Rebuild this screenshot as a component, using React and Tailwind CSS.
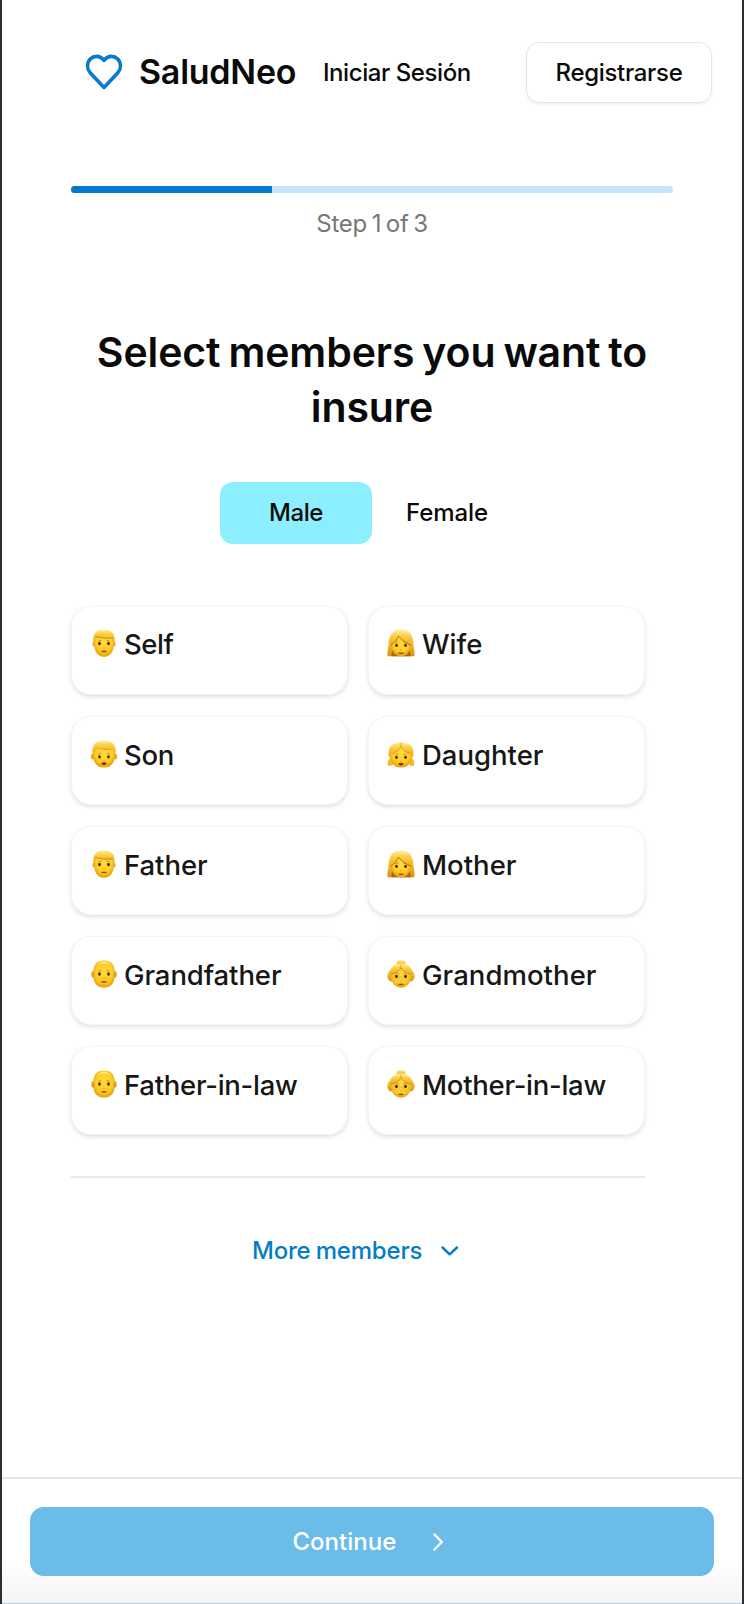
import React from 'react';

function Defs() {
  return (
    <svg className="absolute h-0 w-0" aria-hidden="true">
      <defs>
        <radialGradient id="skin" cx="50%" cy="42%" r="60%">
          <stop offset="0" stopColor="#ffdb3c" />
          <stop offset="0.65" stopColor="#fecb25" />
          <stop offset="1" stopColor="#e29a0c" />
        </radialGradient>
        <linearGradient id="hair" x1="0" y1="0" x2="0" y2="1">
          <stop offset="0" stopColor="#fff0a6" />
          <stop offset="0.35" stopColor="#fdd048" />
          <stop offset="1" stopColor="#eda91a" />
        </linearGradient>
        <linearGradient id="longHair" x1="0" y1="0" x2="0" y2="1">
          <stop offset="0" stopColor="#ffe88f" />
          <stop offset="0.5" stopColor="#f9c02c" />
          <stop offset="1" stopColor="#d8920f" />
        </linearGradient>
      </defs>
    </svg>
  );
}

function Features({ y = 14.5, mouth = 'flat' }) {
  return (
    <g>
      <path d={`M8.6 ${y - 2.8}q1.300-.9 2.600-.3M16.800 ${y - 3.1}q1.300-.6 2.600.3`} stroke="#b87a14" strokeWidth="0.7" fill="none" strokeLinecap="round" />
      <ellipse cx="9.500" cy={y} rx="1.350" ry="1.650" fill="#43290c" />
      <ellipse cx="18.500" cy={y} rx="1.350" ry="1.650" fill="#43290c" />
      <path d={`M13.2 ${y + 4.2}q.8.500 1.600 0`} stroke="#d08d12" strokeWidth="0.8" fill="none" />
      {mouth === 'flat' ? (
        <path d={`M11.200 ${y + 7.8}q2.800-.9 5.600 0-2.800 1.500-5.600 0z`} fill="#80440b" stroke="#80440b" strokeWidth="0.400" />
      ) : (
        <path d={`M11.300 ${y + 6}q2.700-.5 5.400 0-.5 2.300-2.700 2.300t-2.700-2.300z`} fill="#6a2d0b" />
      )}
    </g>
  );
}

function Man() {
  return (
    <>
      <ellipse cx="3.800" cy="15" rx="1.300" ry="2.600" fill="#e9a413" />
      <ellipse cx="24.200" cy="15" rx="1.300" ry="2.600" fill="#e9a413" />
      <path d="M4 9Q4 1 14 1t10 8v6.500Q23.500 24 18 27q-4 1.700-8 0Q4.500 24 4 15.500z" fill="url(#skin)" />
      <path d="M3.400 13Q2 1 13 .4 25.500 0 24.600 13L23.400 10.500Q22.500 8.600 20.500 9 13 9.800 7.500 7.200 5 7.800 4.600 10.500z" fill="url(#hair)" />
      <path d="M5.500 7.500Q13 10 22.800 9" stroke="#b87b0e" strokeWidth="0.800" fill="none" />
      <Features />
    </>
  );
}

function Boy() {
  return (
    <>
      <ellipse cx="2.700" cy="16.500" rx="1.800" ry="3" fill="#eba713" />
      <ellipse cx="25.300" cy="16.500" rx="1.800" ry="3" fill="#eba713" />
      <path d="M3 13Q3 2 14 2t11 11v4Q23.500 27.500 14 27.500T3 17z" fill="url(#skin)" />
      <path d="M2.500 13.500Q1 1 14 .4 27 1 25.500 13.500 24 9.500 20 9.800 12 10 9 8 4 9 2.500 13.500z" fill="url(#hair)" />
      <path d="M4.500 11Q6 7.800 9 8q3 2 7.500 1.500M13.500 7.500q3 2.800 7.500 2.200" stroke="#d49a22" strokeWidth="0.600" fill="none" />
      <Features y={16.8} mouth="open" />
    </>
  );
}

function OldMan() {
  return (
    <>
      <ellipse cx="2.800" cy="14.500" rx="1.500" ry="3.200" fill="#dca63a" />
      <ellipse cx="25.200" cy="14.500" rx="1.500" ry="3.200" fill="#dca63a" />
      <path d="M3.200 12Q3.500 .5 14 .5T24.800 12v5Q23.500 27.700 14 27.700T3.200 17z" fill="url(#skin)" />
      <path d="M7 4.200Q14-.8 21 4.200 14 2.500 7 4.200z" fill="#fff0a8" />
      <path d="M3.200 11q-1 2-.4 5l1.500 1.500zM24.800 11q1 2 .4 5l-1.500 1.500z" fill="#c9962e" />
      <path d="M10 19.600l1.300-1.400M18 19.600l-1.300-1.400" stroke="#cb8a0e" strokeWidth="0.600" />
      <Features y={14} />
    </>
  );
}

function Woman() {
  return (
    <>
      <path d="M1.800 11Q3.500 .4 14 .4T26.200 11q.2 5 .9 9 .8 4.500.3 7.300H.6Q.1 24.500.9 20q.7-4 .9-9z" fill="url(#longHair)" />
      <path d="M5 21q9 9 18 0l.5 6.300h-19z" fill="#a5680b" />
      <path d="M4.200 13Q5.500 5 14 5t9.800 8v4q-1.500 10.300-9.800 10.300T4.200 17z" fill="url(#skin)" />
      <path d="M2.500 17Q2 1 14 .8 26 1 25.500 17.500 17 14.500 11.500 7.500 8.500 13.500 2.500 17z" fill="url(#hair)" />
      <path d="M3.800 16.200Q9.500 12.500 11.500 7.200 17 14 24.500 16.500" stroke="#a96c0b" strokeWidth="0.900" fill="none" />
      <Features y={16.3} />
    </>
  );
}

function Girl() {
  return (
    <>
      <path d="M4.500 18Q0 20 1 23L.5 25q2 1.600 4.300.3L7 23zM23.500 18Q28 20 27 23l.5 2q-2 1.600-4.300.3L21 23z" fill="#f2b92c" />
      <path d="M2.500 15Q2.500 3 14 3t11.500 12v2Q23.500 27.500 14 27.500T2.500 17z" fill="url(#skin)" />
      <path d="M1.600 16.500Q0 2.200 14 2.200T26.400 16.500q-1.700.5-2.600-2.500-6.800-1.500-9.800-7.500-3 6-9.800 7.500Q3.300 17 1.600 16.500z" fill="url(#hair)" />
      <path d="M14 2.500v4.200Q11 12 4.500 13.800M14 6.700q3 5.300 9.500 7.100" stroke="#c98e1b" strokeWidth="0.700" fill="none" />
      <Features y={17.3} mouth="open" />
    </>
  );
}

function OldWoman() {
  return (
    <>
      <ellipse cx="14" cy="3" rx="4.500" ry="3" fill="url(#hair)" />
      <path d="M14 3.500Q22 3.500 25 10q4 4.500 2 9-1.500 3-4.500 2.500h-17Q2.500 22 1 19q-2-4.500 2-9 3-6.500 11-6.500z" fill="url(#longHair)" />
      <path d="M4 15Q5 7 14 7t10 8v3Q22 27.700 14 27.700T4 18z" fill="url(#skin)" />
      <path d="M3 14.500Q4 4 14 4t11 10.500Q18 13 14 8 10 13 3 14.500z" fill="url(#hair)" />
      <path d="M14 4.500V8q-3 5-10 6.500M14 8q3 5 10 6.500" stroke="#c28616" strokeWidth="0.700" fill="none" />
      <Features y={16.5} />
      <g fill="none" stroke="#d8b25c" strokeWidth="0.700">
        <circle cx="9.500" cy="17" r="3.300" />
        <circle cx="18.500" cy="17" r="3.300" />
        <path d="M12.800 17h2.400" />
      </g>
    </>
  );
}

const faces = { man: Man, boy: Boy, oldMan: OldMan, woman: Woman, girl: Girl, oldWoman: OldWoman };

const members = [
  { label: 'Self', face: 'man', tracking: 'tracking-[-0.45px]' },
  { label: 'Wife', face: 'woman', tracking: 'tracking-[0px]' },
  { label: 'Son', face: 'boy', tracking: 'tracking-[-0.3px]' },
  { label: 'Daughter', face: 'girl', tracking: 'tracking-[0px]' },
  { label: 'Father', face: 'man', tracking: 'tracking-[-0.05px]' },
  { label: 'Mother', face: 'woman', tracking: 'tracking-[0px]' },
  { label: 'Grandfather', face: 'oldMan', tracking: 'tracking-[-0.1px]' },
  { label: 'Grandmother', face: 'oldWoman', tracking: 'tracking-[0.05px]' },
  { label: 'Father-in-law', face: 'oldMan', tracking: 'tracking-[-0.28px]' },
  { label: 'Mother-in-law', face: 'oldWoman', tracking: 'tracking-[-0.28px]' },
];

function MemberCard({ label, face, tracking, index }) {
  const Face = faces[face];
  return (
    <button
      className={`flex h-[89px] items-start rounded-[20px] border border-[#f5f5f5] bg-white pl-[18px] text-left shadow-[0_2px_4px_rgba(0,0,0,0.12)] ${index < 2 ? 'pt-[22px]' : 'pt-[23px]'}`}
    >
      <svg viewBox="0 0 28 28" className="h-7 w-7 shrink-0">
        <Face />
      </svg>
      <span className={`whitespace-nowrap text-[27.5px] leading-[30px] text-[#171717] ${index % 2 ? 'ml-[7px]' : 'ml-[6px]'} ${tracking}`}>{label}</span>
    </button>
  );
}

export default function App() {
  return (
    <div className="flex h-[1604px] w-[744px] flex-col border-x-2 border-[#2c2e30] bg-white font-['Inter',sans-serif] font-medium text-[#0a0a0a]">
      <Defs />
      <header className="flex h-[144px] items-center pl-[83px]">
        <svg viewBox="0 0 40 36" className="h-9 w-[38px] shrink-0" fill="none" stroke="#087ccb" strokeWidth="3.700" strokeLinejoin="round" preserveAspectRatio="none">
          <path d="M20 6.300C16.300 1.600 9.800 1 5.700 4.900 1.800 8.700 1.700 14.600 5.300 18.600L20 33.500 34.700 18.600C38.300 14.600 38.200 8.700 34.300 4.900 30.200 1 23.700 1.600 20 6.300Z" />
        </svg>
        <span className="ml-[16px] w-[158px] whitespace-nowrap text-[34px] font-semibold leading-10 tracking-[-0.25px]">SaludNeo</span>
        <a className="ml-[26px] w-[148px] whitespace-nowrap pt-[2px] text-[24px] leading-8 tracking-[-0.43px]">Iniciar Sesión</a>
        <button className="ml-[55px] h-[61px] w-[186px] whitespace-nowrap rounded-[13px] border-[1.500px] border-[#e5e5e5] pt-[2px] text-[24px] tracking-[-0.33px] shadow-[0_2px_3px_rgba(0,0,0,0.06)]">Registrarse</button>
      </header>

      <main className="flex flex-1 flex-col pl-[69px]">
        <div className="mt-[42px] h-[7px] w-[602px] overflow-hidden rounded-full bg-[#c6e4f7]">
          <div className="h-full w-1/3 bg-[#017ace]" />
        </div>
        <p className="mt-[15px] w-[602px] text-center text-[24px] font-normal leading-8 tracking-[-0.2px] text-[#777777] [word-spacing:-2px]">Step 1 of 3</p>

        <h1 className="mt-[85px] w-[602px] text-center text-[41px] font-semibold leading-[55px] tracking-[-0.1px] [word-spacing:-2.3px]">
          Select members you want to<br />insure
        </h1>

        <div className="ml-[149px] mt-[47px] flex h-[62px]">
          <button className="w-[152px] rounded-[13px] bg-[#8cefff] text-[24px] tracking-[-0.4px]">Male</button>
          <button className="w-[150px] text-[24px] tracking-[-0.05px]">Female</button>
        </div>

        <div className="mt-[62px] grid w-[574px] grid-cols-2 gap-x-[20px] gap-y-[21px]">
          {members.map((member, index) => (
            <MemberCard key={member.label} {...member} index={index} />
          ))}
        </div>

        <hr className="mt-[41px] w-[574px] border-t-2 border-[#e8e8e8]" />

        <button className="ml-[181px] mt-[57px] flex h-8 items-center text-[24px] leading-8 text-[#057dc6]">
          <span className="w-[171px] whitespace-nowrap text-left tracking-[-0.2px] [word-spacing:-1px]">More members</span>
          <svg viewBox="0 0 20 12" className="ml-[17px] h-3 w-5" fill="none" stroke="currentColor" strokeWidth="2.500" strokeLinecap="round" strokeLinejoin="round">
            <path d="M2.500 2.500 9.700 9.300 17 2.500" />
          </svg>
        </button>
      </main>

      <footer className="h-[127px] border-b border-t-2 border-b-[#bdd3e2] border-t-[#e3e7ea] bg-linear-to-b from-white from-65% to-[#f4f4f4] pl-[27.500px] pr-[28px] pt-[28px]">
        <button className="flex h-[69px] w-full items-center rounded-[14px] bg-[#6bbce8] pl-[263px] text-[24px] text-white">
          <span className="w-[105px] whitespace-nowrap text-left tracking-[0px]">Continue</span>
          <svg viewBox="0 0 12 20" className="ml-[34px] h-5 w-3" fill="none" stroke="currentColor" strokeWidth="2.500" strokeLinecap="round" strokeLinejoin="round">
            <path d="M2.500 2.500 9.800 10 2.500 17.500" />
          </svg>
        </button>
      </footer>
    </div>
  );
}
